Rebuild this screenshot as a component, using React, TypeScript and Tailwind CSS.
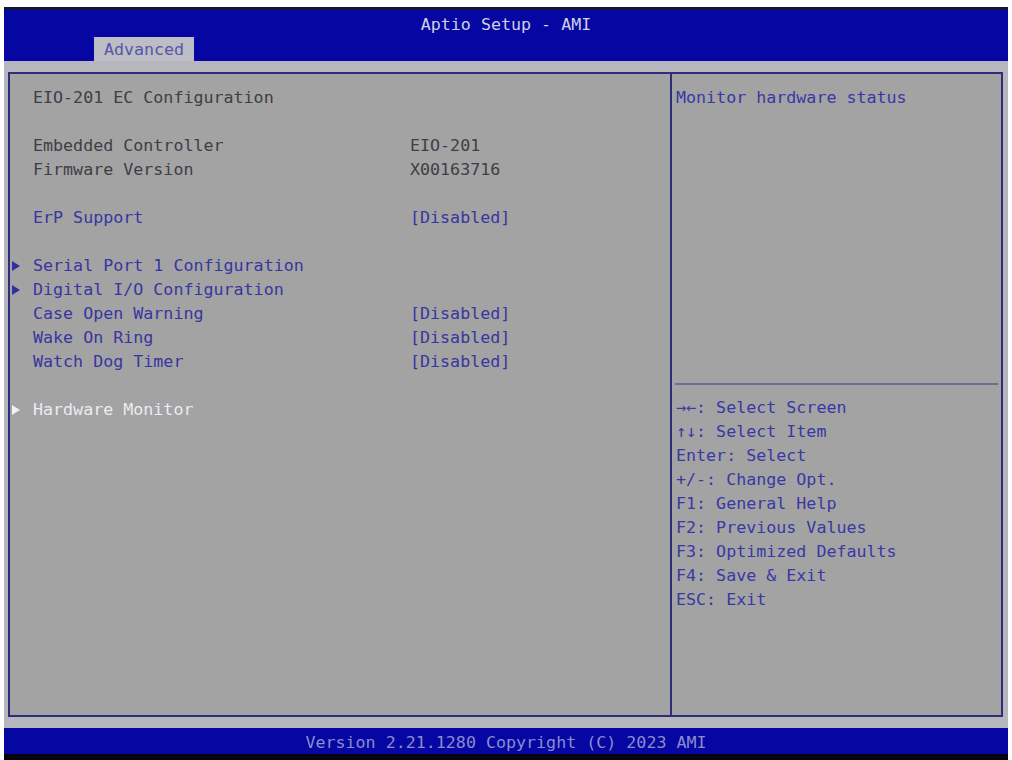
import React from 'react';

type Row =
  | { kind: 'blank' }
  | { kind: 'text'; label: string; value?: string; tone: 'static' | 'item' | 'sub' | 'active' };

const rows: Row[] = [
  { kind: 'text', label: 'EIO-201 EC Configuration', tone: 'static' },
  { kind: 'blank' },
  { kind: 'text', label: 'Embedded Controller', value: 'EIO-201', tone: 'static' },
  { kind: 'text', label: 'Firmware Version', value: 'X00163716', tone: 'static' },
  { kind: 'blank' },
  { kind: 'text', label: 'ErP Support', value: '[Disabled]', tone: 'item' },
  { kind: 'blank' },
  { kind: 'text', label: 'Serial Port 1 Configuration', tone: 'sub' },
  { kind: 'text', label: 'Digital I/O Configuration', tone: 'sub' },
  { kind: 'text', label: 'Case Open Warning', value: '[Disabled]', tone: 'item' },
  { kind: 'text', label: 'Wake On Ring', value: '[Disabled]', tone: 'item' },
  { kind: 'text', label: 'Watch Dog Timer', value: '[Disabled]', tone: 'item' },
  { kind: 'blank' },
  { kind: 'text', label: 'Hardware Monitor', tone: 'active' },
];

const help = [
  '→←: Select Screen',
  '↑↓: Select Item',
  'Enter: Select',
  '+/-: Change Opt.',
  'F1: General Help',
  'F2: Previous Values',
  'F3: Optimized Defaults',
  'F4: Save & Exit',
  'ESC: Exit',
];

const Arrow = ({ color }: { color: string }) => (
  <svg width="8" height="10" viewBox="0 0 8 10" className="shrink-0">
    <polygon points="0,0 8,5 0,10" fill={color} />
  </svg>
);

export default function App() {
  return (
    <div
      className="h-[760px] w-[1012px] bg-white pt-[7px] px-[4px] text-[16.67px] leading-6"
      style={{ fontFamily: '"DejaVu Sans Mono", "Liberation Mono", monospace' }}>
      <div className="flex h-full flex-col">

        {/* HEADER */}
        <div className="h-[54px] shrink-0 border-t-[3px] border-[#12123a] bg-[#0606a2] pt-[3px]">
          <div className="h-6 text-center text-[#cfd0e4]">Aptio Setup - AMI</div>
          <div className="ml-[90px] h-6 w-[100px] bg-[#bdbdc6] pt-[1px] text-center text-[#5656a6]">
            Advanced
          </div>
        </div>

        {/* BODY */}
        <div className="flex-1 bg-[#b6b6be] pl-[4px] pr-[5px] pt-[11px] pb-[11px]">
          <div className="flex h-full border-2 border-[#2e2e78] bg-[#a3a3a3]">

            {/* LEFT PANEL */}
            <div className="w-[662px] shrink-0 border-r-2 border-[#2e2e78] pt-3">
              {rows.map((r, i) => {
                if (r.kind === 'blank') return <div key={i} className="h-6" />;
                const color =
                  r.tone === 'static' ? 'text-[#3e3e44]'
                    : r.tone === 'active' ? 'text-[#ececf2]'
                    : 'text-[#3636a0]';
                return (
                  <div key={i} className={`flex h-6 items-center ${color}`}>
                    <div className="flex w-[23px] shrink-0 pl-[2px]">
                      {r.tone === 'sub' && <Arrow color="#3030a0" />}
                      {r.tone === 'active' && <Arrow color="#f0f0f6" />}
                    </div>
                    <span className="w-[377px] shrink-0 whitespace-pre">{r.label}</span>
                    {r.value && (
                      <span className={r.tone === 'static' ? 'text-[#3e3e44]' : 'text-[#3636a0]'}>
                        {r.value}
                      </span>
                    )}
                  </div>
                );
              })}
            </div>

            {/* RIGHT PANEL */}
            <div className="flex flex-1 flex-col pt-3 text-[#3838a6]">
              <div className="h-[297px] pl-[4px]">Monitor hardware status</div>
              <div className="mx-[3px] h-[2px] bg-[#6e6e90]" />
              <div className="pl-[4px] pt-[11px]">
                {help.map((h) => (
                  <div key={h} className="h-6 whitespace-pre">{h}</div>
                ))}
              </div>
            </div>
          </div>
        </div>

        {/* FOOTER */}
        <div className="h-[26px] shrink-0 bg-[#0606a2] pt-[3px] text-center text-[#8c8ccc]">
          Version 2.21.1280 Copyright (C) 2023 AMI
        </div>
        <div className="h-[6px] shrink-0 bg-[#050510]" />
      </div>
    </div>
  );
}
